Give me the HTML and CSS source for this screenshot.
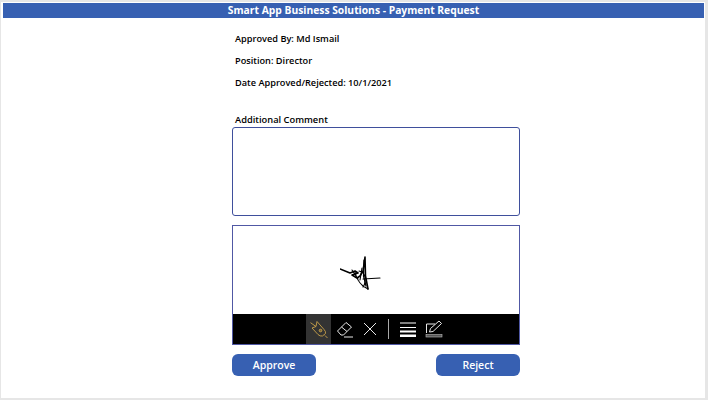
FILE: index.html
```html
<!DOCTYPE html>
<html lang="en">
<head>
<meta charset="utf-8">
<title>Payment Request</title>
<link rel="stylesheet" href="styles.css">
</head>
<body>
<main class="canvas">
  <header class="title-bar">Smart App Business Solutions - Payment Request</header>
  <section class="form">
    <p class="line">Approved By: Md Ismail</p>
    <p class="line">Position: Director</p>
    <p class="line">Date Approved/Rejected: 10/1/2021</p>
    <label class="comment-label">Additional Comment</label>
    <div class="comment-box"></div>
    <div class="pen-box">
      <div class="pen-surface">
        <svg class="signature" width="44" height="40" viewBox="0 0 44 40" fill="none" stroke="#000" stroke-linecap="round" stroke-linejoin="round">
          <path stroke-width="1.6" d="M0 15 L10 19 L15 17 L18 19 L12 21 L17 24 L20 22 L23 17 L25 3 L25.5 22 L28 35"/>
          <path stroke-width="1.1" d="M15 18 Q17 27 23 32 L28 35 M23 25 L40 24 M19 17 Q24 18 25 23 Q26 29 23 33 M12 16 L18 25 M22 14 L20 26"/>
          <path stroke-width="1.2" d="M24 6 L23.5 22 L26 32"/>
        </svg>
      </div>
      <div class="pen-toolbar">
        <button class="tool tool-active" type="button" aria-label="Draw">
          <svg width="20" height="20" viewBox="0 0 20 20" fill="none" stroke="#c8a24a" stroke-width="0.9">
            <path d="M1.5 3.7 L7 7.5 M8 2.5 L7 7.5 L3 9 L9 15.5 Q11 17.5 13.5 17 L16.5 14.5 Q17 12.5 15 10.5 L8 2.5 M16 16.5 L18.5 19"/>
            <circle cx="11.5" cy="11.5" r="1.3" fill="#7a6430"/>
          </svg>
        </button>
        <button class="tool tool-eraser" type="button" aria-label="Erase">
          <svg width="20" height="20" viewBox="0 0 20 20" fill="none" stroke="#e8e8e8" stroke-width="1">
            <path d="M2.5 12 L11 3.5 L16.5 8 L8.5 16 L6 16 Z M6.5 8 L12 12.5 M9 18 L18 18"/>
          </svg>
        </button>
        <button class="tool" type="button" aria-label="Clear">
          <svg width="20" height="20" viewBox="0 0 20 20" fill="none" stroke="#e8e8e8" stroke-width="1">
            <path d="M4 4 L16 16 M16 4 L4 16"/>
          </svg>
        </button>
        <span class="tool-sep"></span>
        <button class="tool tool-lines" type="button" aria-label="Thickness">
          <svg width="20" height="20" viewBox="0 0 20 20" fill="#fff">
            <rect x="2" y="3.5" width="16" height="1"/>
            <rect x="2" y="8" width="16" height="1"/>
            <rect x="2" y="11.5" width="16" height="2"/>
            <rect x="2" y="15.5" width="16" height="2.5"/>
          </svg>
        </button>
        <button class="tool" type="button" aria-label="Colour">
          <svg width="20" height="20" viewBox="0 0 20 20" fill="none" stroke="#e8e8e8" stroke-width="1">
            <path d="M2.5 14 L2.5 5 L11 5 M5.5 13 L6.5 9.5 L15 2 L17.5 4.5 L9 12.5 Z"/>
            <rect x="2" y="15.5" width="16" height="2.5" fill="#555" stroke="#bbb" stroke-width="0.6"/>
          </svg>
        </button>
      </div>
    </div>
    <div class="actions">
      <button class="action" type="button">Approve</button>
      <button class="action" type="button">Reject</button>
    </div>
  </section>
</main>
</body>
</html>
```
FILE: styles.css
```css
* { box-sizing: border-box; }
html, body { margin: 0; height: 100%; }
body {
  background: #e6e6e6;
  padding: 2px 3px 2px 1px;
  font-family: "Open Sans", "Noto Sans", sans-serif;
  overflow: hidden;
}
.canvas {
  height: 396px;
  background: #fff;
  padding: 1px 1px 0 2px;
}
.title-bar {
  height: 15px;
  background: #3760b2;
  color: #fff;
  font-size: 10.3px;
  font-weight: 700;
  line-height: 15px;
  text-align: center;
}
.form {
  width: 288px;
  margin-left: 229px;
  display: flex;
  flex-direction: column;
}
.line {
  margin: 0 0 0 3px;
  height: 22px;
  font-size: 9.2px;
  font-weight: 600;
  line-height: 22px;
  color: #000;
}
.line:first-child { margin-top: 10px; }
.comment-label {
  margin: 18px 0 0 3px;
  height: 15px;
  font-size: 9.3px;
  font-weight: 600;
  line-height: 15px;
  color: #000;
}
.comment-box {
  height: 89px;
  border: 1px solid #3f4f9c;
  border-radius: 3px;
  background: #fff;
}
.pen-box {
  height: 120px;
  margin-top: 9px;
  border: 1px solid #5058a4;
  display: flex;
  flex-direction: column;
}
.pen-surface {
  flex: 1;
  padding: 28px 0 0 107px;
}
.signature { display: block; }
.pen-toolbar {
  height: 30px;
  background: #000;
  display: flex;
  align-items: center;
  padding-left: 73px;
}
.tool {
  width: 25px;
  height: 30px;
  padding: 0;
  border: 0;
  background: transparent;
  display: flex;
  align-items: center;
  justify-content: center;
}
.tool-active { background: #333; }
.tool-eraser { margin-left: 1px; }
.tool-sep {
  width: 1px;
  height: 20px;
  margin: 0 6px 0 6px;
  background: #aaa;
}
.tool-lines { margin-right: 1px; }
.actions {
  display: flex;
  justify-content: space-between;
  margin-top: 9px;
}
.action {
  width: 84px;
  height: 22px;
  border: 0;
  border-radius: 6px;
  background: #3760b2;
  color: #fff;
  font-family: inherit;
  font-size: 10.5px;
  font-weight: 600;
  padding: 0;
}
```
